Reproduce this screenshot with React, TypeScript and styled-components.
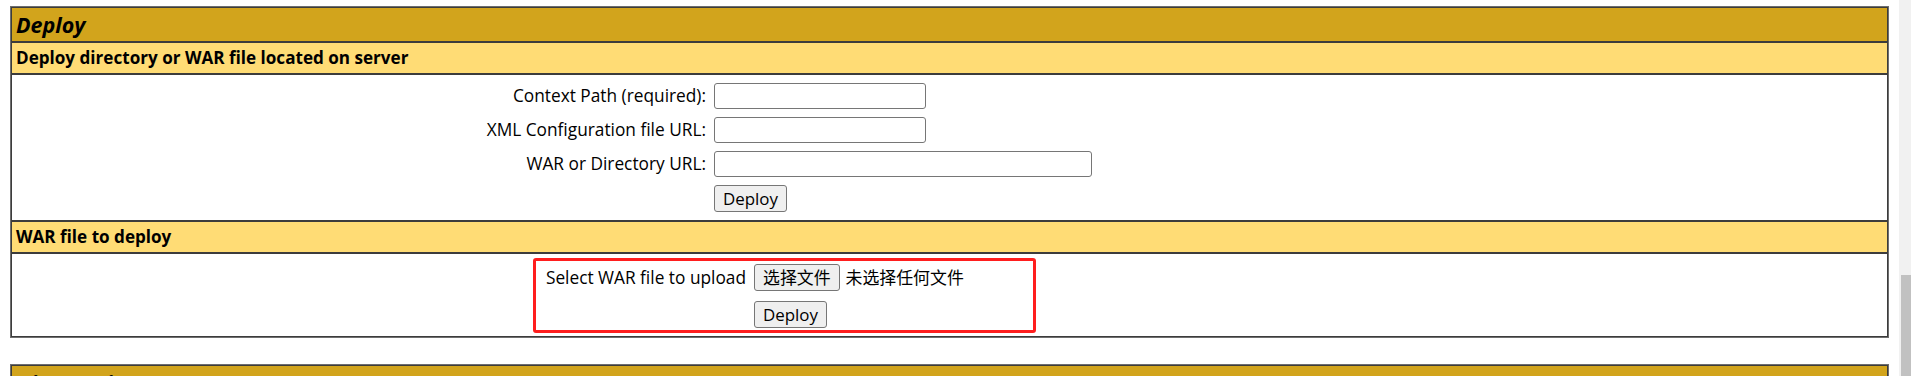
import styled, { createGlobalStyle } from "styled-components";

const GlobalStyle = createGlobalStyle`
  html, body {
    margin: 0;
    padding: 0;
    overflow: hidden;
    background: #ffffff;
  }
  body {
    font-family: "Open Sans", "Noto Sans CJK SC", sans-serif;
    color: #000000;
  }
`;

const colors = {
  title: "#D2A41C",
  header: "#FFDC75",
  outer: "#6e6e6e",
  cell: "#3c3c3c",
  control: "#767676",
  buttonFace: "#efefef",
  highlight: "#ff1e1e",
  track: "#f1f1f1",
  thumb: "#c1c1c1",
};

const textFont = `"Open Sans", "Noto Sans CJK SC", sans-serif`;

const deployFields = [
  { label: "Context Path (required):", width: 212 },
  { label: "XML Configuration file URL:", width: 212 },
  { label: "WAR or Directory URL:", width: 378 },
];

const App = () => {
  return (
    <Page>
      <GlobalStyle />
      <Main>
        <Section>
          <TitleRow>Deploy</TitleRow>
          <HeaderRow>Deploy directory or WAR file located on server</HeaderRow>
          <BodyRow>
            <FormGrid $labelWidth={694}>
              {deployFields.map((f) => (
                <FieldRow key={f.label}>
                  <Label>{f.label}</Label>
                  <Field>
                    <TextInput type="text" $w={f.width} />
                  </Field>
                </FieldRow>
              ))}
              <FieldRow>
                <Label />
                <Field>
                  <Button type="button">Deploy</Button>
                </Field>
              </FieldRow>
            </FormGrid>
          </BodyRow>
          <HeaderRow>WAR file to deploy</HeaderRow>
          <BodyRow>
            <FormGrid $labelWidth={734}>
              <FieldRow>
                <Label>Select WAR file to upload</Label>
                <Field>
                  <FilePicker>
                    <Button type="button">选择文件</Button>
                    <FileName>未选择任何文件</FileName>
                  </FilePicker>
                </Field>
              </FieldRow>
              <FieldRow>
                <Label />
                <Field>
                  <Button type="button">Deploy</Button>
                </Field>
              </FieldRow>
            </FormGrid>
            <Highlight />
          </BodyRow>
        </Section>
        <Gap />
        <Section>
          <TitleRow>Diagnostics</TitleRow>
        </Section>
      </Main>
      <Scrollbar>
        <Thumb />
      </Scrollbar>
    </Page>
  );
};

export default App;

const Page = styled.div`
  display: flex;
  width: 1911px;
  height: 376px;
  overflow: hidden;
`;

const Main = styled.div`
  flex: 1;
  padding: 6px 10px 0 10px;
`;

const Section = styled.div`
  display: flex;
  flex-direction: column;
  border: 1px solid ${colors.outer};
`;

const Row = styled.div`
  border: 1px solid ${colors.cell};
  padding: 4px;
  text-align: left;
`;

const TitleRow = styled(Row)`
  background: ${colors.title};
  font-family: ${textFont};
  font-style: italic;
  font-weight: bold;
  font-size: 21.5px;
  line-height: 25px;
`;

const HeaderRow = styled(Row)`
  background: ${colors.header};
  font-family: ${textFont};
  font-weight: bold;
  font-size: 17.1px;
  line-height: 22px;
`;

const BodyRow = styled(Row)`
  position: relative;
  background: #ffffff;
`;

const FormGrid = styled.div<{ $labelWidth: number }>`
  display: grid;
  grid-template-columns: ${(p) => p.$labelWidth}px 1fr;
`;

const FieldRow = styled.div`
  display: contents;
`;

const Label = styled.div`
  padding: 4px;
  text-align: right;
  align-self: center;
  font-family: ${textFont};
  font-size: 17.3px;
  line-height: 22px;
`;

const Field = styled.div`
  padding: 4px;
  display: flex;
  align-items: center;
  min-height: 26px;
`;

const TextInput = styled.input<{ $w: number }>`
  box-sizing: border-box;
  width: ${(p) => p.$w}px;
  height: 26px;
  margin: 0;
  padding: 1px 3px;
  border: 1px solid ${colors.control};
  border-radius: 3px;
  background: #ffffff;
  font-family: ${textFont};
  font-size: 16.7px;
`;

const Button = styled.button`
  box-sizing: border-box;
  height: 27px;
  margin: 0;
  padding: 0 8px;
  border: 1px solid ${colors.control};
  border-radius: 3px;
  background: ${colors.buttonFace};
  color: #000000;
  font-family: ${textFont};
  font-size: 16.9px;
  line-height: 25px;
`;

const FilePicker = styled.div`
  display: flex;
  align-items: center;
  gap: 6px;
  min-height: 31px;
`;

const FileName = styled.span`
  font-family: ${textFont};
  font-size: 16.9px;
  line-height: 22px;
`;

const Highlight = styled.div`
  position: absolute;
  left: 521px;
  top: 4px;
  width: 503px;
  height: 75px;
  box-sizing: border-box;
  border: 3px solid ${colors.highlight};
  border-radius: 3px;
  pointer-events: none;
`;

const Gap = styled.div`
  height: 26px;
`;

const Scrollbar = styled.div`
  width: 12px;
  display: flex;
  flex-direction: column;
  background: ${colors.track};
`;

const Thumb = styled.div`
  margin: 275px 0 0 2px;
  flex: 1;
  background: ${colors.thumb};
`;
